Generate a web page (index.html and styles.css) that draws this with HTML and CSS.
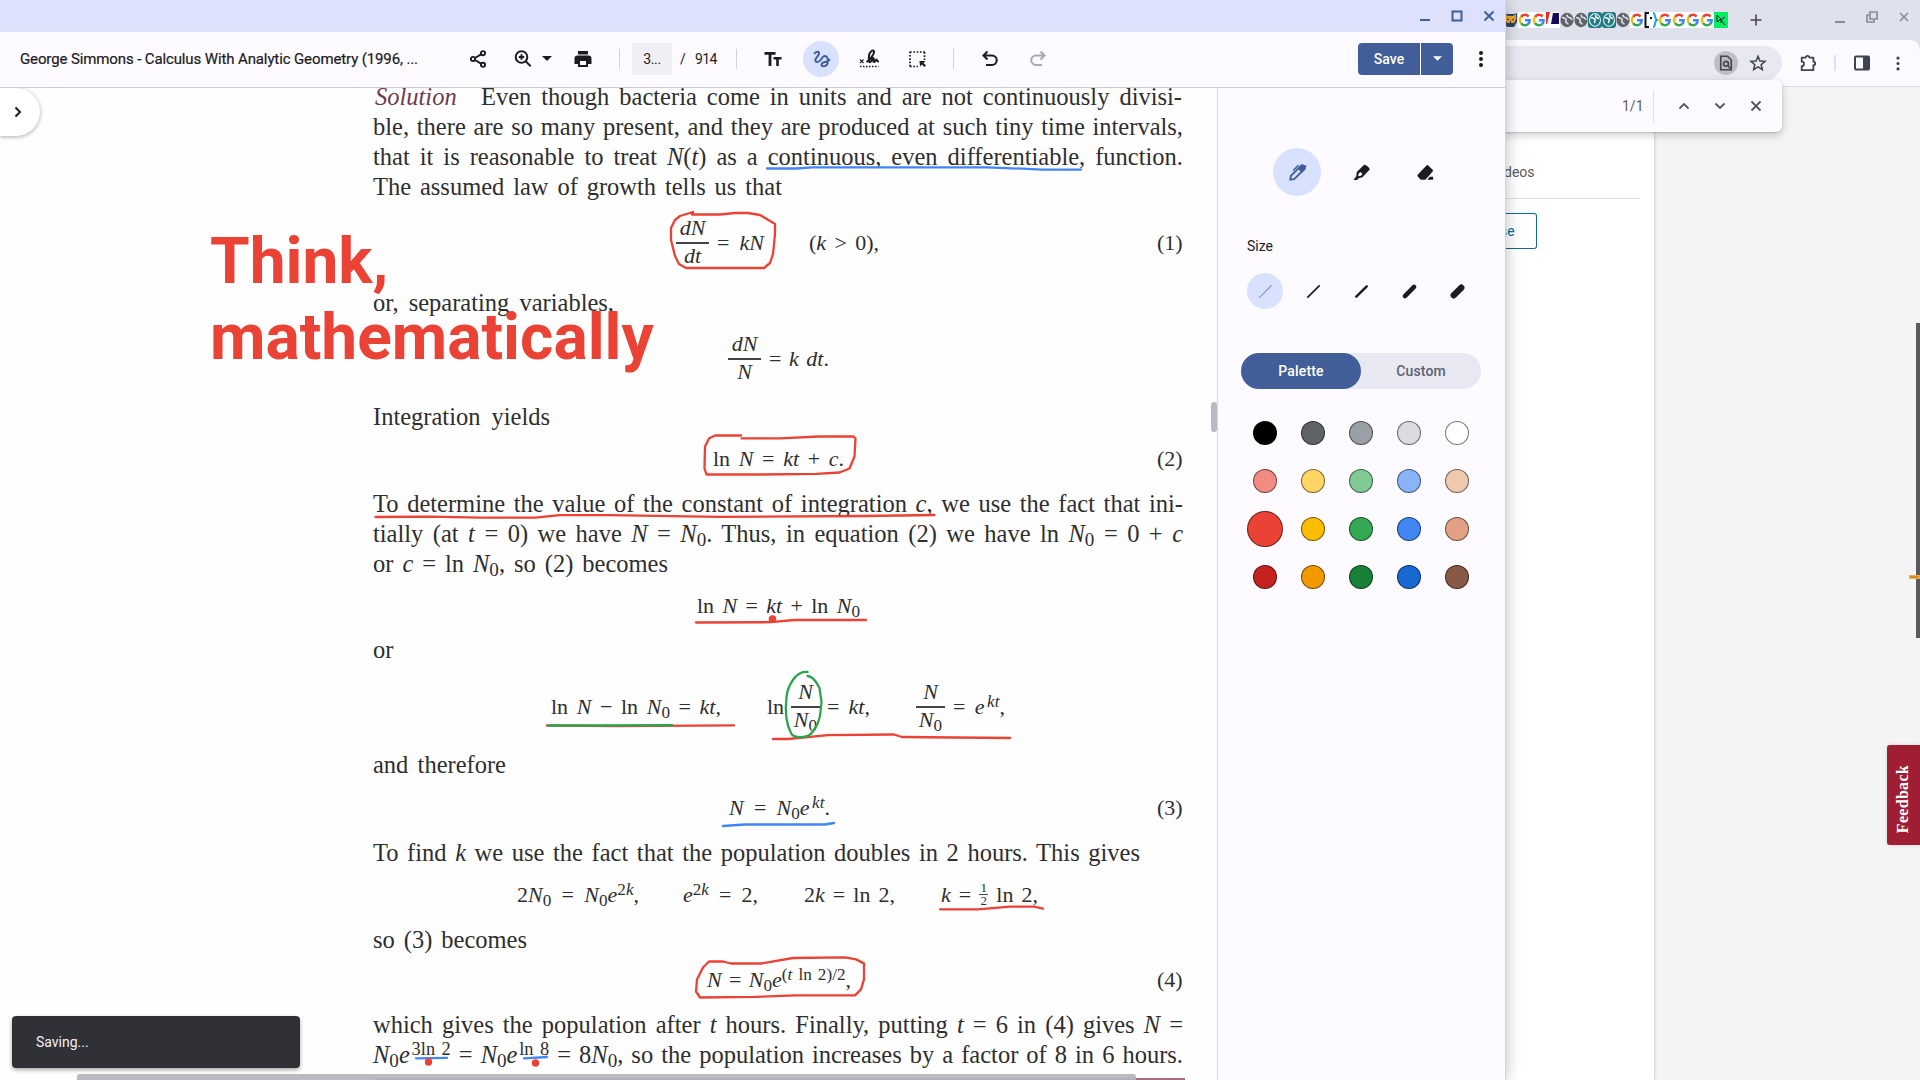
FILE: index.html
```html
<!DOCTYPE html>
<html lang="en">
<head>
<meta charset="utf-8">
<title>George Simmons - Calculus With Analytic Geometry</title>
<link rel="stylesheet" href="styles.css">
</head>
<body>
<svg class="defs" width="0" height="0">
  <symbol id="g" viewBox="0 0 14 16"><rect width="14" height="16" fill="#fff"/><g fill="none" stroke-width="2.6"><path d="M10.6 4.6A4.8 5 0 0 0 3 4.9" stroke="#ea4335"/><path d="M3 4.9a5 5.200 0 0 0 0 6.200" stroke="#fbbc05"/><path d="M3 11.100a4.800 5 0 0 0 7.300.7" stroke="#34a853"/><path d="M7 8.200h4.600c0 1.500-.5 2.700-1.300 3.600" stroke="#4285f4"/></g></symbol>
  <symbol id="globe" viewBox="0 0 14 16"><rect width="14" height="16" fill="#dfe1ed"/><ellipse cx="7" cy="8" rx="6.600" ry="7.200" fill="currentColor"/><path d="M2 5.500c2 0 3 .5 4 2s-1 2 0 3 2 0 2 2M7.500 2.500c-1 2 .5 3 2 3s1.500 2 3 2" fill="none" stroke="#dfe1ed" stroke-width="1.600"/></symbol>
  <symbol id="teal" viewBox="0 0 14 16"><rect width="14" height="16" rx="3" fill="#1f7a85"/><ellipse cx="7" cy="8" rx="5.500" ry="6.300" fill="none" stroke="#d5e8ea" stroke-width="1.200"/><path d="M3 6c2-1 3 .5 4 1.500s-1.500 2 0 3.500M8 3c-1 2 .5 3 3 3.500" fill="none" stroke="#fff" stroke-width="1.600"/></symbol>
</svg>

<div class="desktop">
  <section class="browser">
    <header class="tabstrip">
      <div class="favicons">
        <svg viewBox="0 0 14 16"><rect width="14" height="16" fill="#dfe1ed"/><path d="M0 1l3 1h7l3-1v9l-3 5H3L0 10z" fill="#2e4a6b"/><path d="M1 2l3 2h5l3-2v5l-2 4H3L1 7z" fill="#f5a623"/><path d="M3 7l2 1M10 7L8 8M4 12h5M6.500 9v2" stroke="#24344d"/></svg>
        <svg><use href="#g"/></svg><svg><use href="#g"/></svg>
        <svg viewBox="0 0 14 16"><rect width="14" height="16" fill="#fff"/><path d="M0 0h4L1 12H0z" fill="#ee2b1f"/><path d="M7 1h6v11H5z" fill="#160a5a"/></svg>
        <svg class="gray"><use href="#globe"/></svg><svg class="gray"><use href="#globe"/></svg>
        <svg><use href="#teal"/></svg><svg><use href="#teal"/></svg>
        <svg class="gray"><use href="#globe"/></svg><svg><use href="#g"/></svg>
        <svg viewBox="0 0 14 16"><rect width="14" height="16" fill="#fff"/><path d="M5 1H1.500v14H5" fill="none" stroke="#111" stroke-width="2"/><path d="M6 5h2v2H6z" fill="#111"/><path d="M9 1c3 0 1 6 4 7-3 1-1 7-4 7" fill="none" stroke="#19a7e8" stroke-width="2"/></svg>
        <svg><use href="#g"/></svg><svg><use href="#g"/></svg><svg><use href="#g"/></svg><svg><use href="#g"/></svg>
        <svg viewBox="0 0 14 16"><rect width="14" height="16" fill="#03ef62"/><path d="M3 3v7l4-3zM11 5L7 8l4 5M7 8v3" fill="none" stroke="#05192d"/></svg>
      </div>
      <svg class="plus" viewBox="0 0 12 12"><path d="M6 .5v11M.5 6h11" stroke="#45464f" stroke-width="1.600"/></svg>
      <svg class="wc wc-min" viewBox="0 0 12 12"><path d="M1 10h10" stroke="#8b8d98" stroke-width="2"/></svg>
      <svg class="wc wc-res" viewBox="0 0 12 12"><path d="M4 1h7v7H4zM3 4H1v7h7V9" fill="none" stroke="#8b8d98" stroke-width="1.700"/></svg>
      <svg class="wc wc-x" viewBox="0 0 12 12"><path d="M2 2l8 8M10 2l-8 8" stroke="#8b8d98" stroke-width="1.700"/></svg>
    </header>
    <div class="navbar">
      <div class="omnibox">
        <span class="findchip"><svg viewBox="0 0 24 24"><path d="M5 3h9l5 5v13H5z" fill="none" stroke="#45464f" stroke-width="2.200"/><circle cx="12" cy="13" r="3.200" fill="none" stroke="#45464f" stroke-width="2.200"/><path d="M14 15l4.500 5" stroke="#45464f" stroke-width="2.200"/></svg></span>
        <svg class="star" viewBox="0 0 24 24"><path d="M12 3l2.600 6.300 6.800.5-5.200 4.400 1.600 6.600-5.800-3.500-5.800 3.500 1.600-6.600-5.200-4.400 6.800-.5z" fill="none" stroke="#3f4350" stroke-width="2"/></svg>
      </div>
      <svg class="puzzle" viewBox="0 0 20 20"><path d="M3 4h4.500a2 2 0 0 1 4 0H16v4.500a2 2 0 0 1 0 4V18H3v-4.500a2.500 2.500 0 0 0 0-5z" fill="none" stroke="#3f4350" stroke-width="2" stroke-linejoin="round"/></svg>
      <i class="navsep"></i>
      <svg class="side" viewBox="0 0 16 16"><rect x="1" y="1.500" width="14" height="13" rx="1" fill="none" stroke="#3f4350" stroke-width="2"/><path d="M9 1h6v14H9z" fill="#3f4350"/></svg>
      <svg class="kebab" viewBox="0 0 4 16"><path d="M2 2.200v.01M2 8v.01M2 13.800v.01" stroke="#3f4350" stroke-width="3.400" stroke-linecap="round"/></svg>
    </div>
    <main class="webpage">
      <div class="sheet">
        <div class="webtab">deos</div>
        <div class="webbtn">se</div>
      </div>
    </main>
    <div class="findbar">
      <span>1/1</span><i></i>
      <svg viewBox="0 0 12 12"><path d="M1.500 8.500L6 4l4.500 4.500" /></svg>
      <svg viewBox="0 0 12 12"><path d="M1.500 3.500L6 8l4.500-4.500" /></svg>
      <svg viewBox="0 0 12 12"><path d="M1.500 1.500l9 9M10.500 1.500l-9 9" /></svg>
    </div>
    <i class="pagethumb"></i><i class="findmark"></i>
    <div class="feedback"><span>Feedback</span></div>
  </section>

  <section class="viewer">
    <header class="titlebar">
      <svg viewBox="0 0 12 12"><path d="M1 10h10"/></svg>
      <svg viewBox="0 0 12 12"><path d="M1.500 1.500h9v9h-9z"/></svg>
      <svg viewBox="0 0 12 12"><path d="M1.500 1.500l9 9M10.500 1.500l-9 9"/></svg>
    </header>
    <div class="toolbar">
      <h1>George Simmons - Calculus With Analytic Geometry (1996, ...</h1>
      <svg class="ic share" viewBox="0 0 20 20"><g fill="none" stroke="currentColor" stroke-width="1.900"><circle cx="15" cy="4.200" r="2.100"/><circle cx="5" cy="10" r="2.100"/><circle cx="15" cy="15.800" r="2.100"/><path d="M7 9l6-3.600M7 11l6 3.600"/></g></svg>
      <svg class="ic zoomin" viewBox="0 0 20 20"><g fill="none" stroke="currentColor" stroke-width="2"><circle cx="8.500" cy="8" r="5.800"/><path d="M12.700 12.300l5 5M8.500 5.300v5.400M5.800 8h5.400"/></g></svg>
      <svg class="ic caret" viewBox="0 0 10 5"><path d="M0 0h10L5 5z" fill="currentColor"/></svg>
      <svg class="ic printer" viewBox="0 0 20 20"><path d="M5 2h10v3.500H5zM4.500 6.500h11a3 3 0 0 1 3 3V15H15v3H5v-3H1.500V9.500a3 3 0 0 1 3-3zM7 12v4h6v-4z" fill="currentColor" fill-rule="evenodd"/></svg>
      <i class="sep s1"></i>
      <span class="pageno">3...</span><span class="slash">/</span><span class="total">914</span>
      <i class="sep s2"></i>
      <svg class="ic tt" viewBox="0 0 20 20"><path d="M1.500 3h11v2.700H8.400V17H5.600V5.700H1.500zM10.500 8h8v2.600h-2.700V17h-2.600v-6.400h-2.700z" fill="currentColor"/></svg>
      <span class="active"><svg viewBox="0 0 20 20"><path d="M2.700 4.500C4.500 2.300 7.800 2 7.300 5S3.200 9.500 3.500 12s3 2 4.700.5 2-3 3.600-4.300 4-.9 4.500 1.400.4 6.500-1.700 7.800-5 .7-4.600-1.100 2.500-2.500 4.600-2.800 2.800-1 3.800-2.100" fill="none" stroke="#415e98" stroke-width="2.100" stroke-linecap="round"/></svg></span>
      <svg class="ic sign" viewBox="0 0 20 20"><path d="M1 10.500l3.500 3.500M4.500 10.500L1 14" stroke="currentColor" stroke-width="1.100"/><path d="M7.500 13C11 11 15.500 5 15 2.500S10.500 2 10 7s0 7 1.500 6 1.500-4 2.800-4-.8 4 .7 4 1.500-2.500 2.500-2.500-.2 2.500 2.800 2" fill="none" stroke="currentColor" stroke-width="2"/><path d="M1 17.500h18.500" stroke="currentColor" stroke-width="1.500" stroke-dasharray="1.500 1.500"/></svg>
      <svg class="ic select" viewBox="0 0 20 20"><path d="M3 17.500V2.500M3 3h15M17.500 3v8M3 17.500h8" fill="none" stroke="currentColor" stroke-width="1.700" stroke-dasharray="1.700 1.600"/><path d="M12.500 12h6l-2 2 2.500 2.500-1.500 1.500-2.500-2.500-2 2z" fill="currentColor"/></svg>
      <i class="sep s3"></i>
      <svg class="ic undo" viewBox="0 0 20 20"><path d="M7.500 2.500L3.500 6.500l4 4M4 6.500h8a4.700 4.700 0 0 1 0 9.500H6" fill="none" stroke="currentColor" stroke-width="2.100"/></svg>
      <svg class="ic redo" viewBox="0 0 20 20"><path d="M12.500 2.500l4 4-4 4M16 6.500H8A4.700 4.700 0 0 0 8 16h6" fill="none" stroke="currentColor" stroke-width="2"/></svg>
      <div class="save"><span>Save</span><b><svg viewBox="0 0 10 5"><path d="M0 0h10L5 5z" fill="#fff"/></svg></b></div>
      <svg class="ic more" viewBox="0 0 4 16"><path d="M2 2v.01M2 8v.01M2 14v.01" stroke="currentColor" stroke-width="4" stroke-linecap="round"/></svg>
    </div>
    <div class="content">
      <article class="doc">
        <div class="ln l1"><em class="sol">Solution</em><span class="w l1b">Even though bacteria come in units and are not continuously divisi-</span></div>
        <div class="ln l2 w">ble, there are so many present, and they are produced at such tiny time intervals,</div>
        <div class="ln l3 w">that it is reasonable to treat <i>N</i>(<i>t</i>) as a continuous, even differentiable, function.</div>
        <div class="ln l4 w">The assumed law of growth tells us that</div>
        <div class="ln eq q1"><span class="frac"><i>dN</i><i>dt</i></span><span class="w q1a">= <i>kN</i></span><span class="w q1b">(<i>k</i> &gt; 0),</span><span class="no">(1)</span></div>
        <div class="ln l5 w">or, separating variables,</div>
        <div class="ln eq q2"><span class="frac"><i>dN</i><i>N</i></span><span class="w q2a">= <i>k dt</i>.</span></div>
        <div class="ln l6 w">Integration yields</div>
        <div class="ln eq q3"><span class="w">ln <i>N</i> = <i>kt</i> + <i>c</i>.</span><span class="no">(2)</span></div>
        <div class="ln l7 w">To determine the value of the constant of integration <i>c</i>, we use the fact that ini-</div>
        <div class="ln l8 w">tially (at <i>t</i> = 0) we have <i>N</i> = <i>N</i><sub>0</sub>. Thus, in equation (2) we have ln <i>N</i><sub>0</sub> = 0 + <i>c</i></div>
        <div class="ln l9 w">or <i>c</i> = ln <i>N</i><sub>0</sub>, so (2) becomes</div>
        <div class="ln eq q4"><span class="w">ln <i>N</i> = <i>kt</i> + ln <i>N</i><sub>0</sub></span></div>
        <div class="ln l10">or</div>
        <div class="ln eq q5"><span class="w q5a">ln <i>N</i> − ln <i>N</i><sub>0</sub> = <i>kt</i>,</span><span class="q5b">ln</span><span class="frac"><i>N</i><span><i>N</i><sub>0</sub></span></span><span class="w q5c">= <i>kt</i>,</span><span class="frac f3"><i>N</i><span><i>N</i><sub>0</sub></span></span><span class="w q5d">= <i>e</i><sup class="gap"><i>kt</i></sup>,</span></div>
        <div class="ln l11 w">and therefore</div>
        <div class="ln eq q6"><span class="w"><i>N</i> = <i>N</i><sub>0</sub><i>e</i><sup class="gap"><i>kt</i></sup>.</span><span class="no">(3)</span></div>
        <div class="ln l12 w">To find <i>k</i> we use the fact that the population doubles in 2 hours. This gives</div>
        <div class="ln eq q7"><span class="w q7a">2<i>N</i><sub>0</sub> = <i>N</i><sub>0</sub><i>e</i><sup>2<i>k</i></sup>,</span><span class="w q7b"><i>e</i><sup>2<i>k</i></sup> = 2,</span><span class="w q7c">2<i>k</i> = ln 2,</span><span class="w q7d"><i>k</i> = <span class="half"><span>1</span><span>2</span></span> ln 2,</span></div>
        <div class="ln l13 w">so (3) becomes</div>
        <div class="ln eq q8"><span class="w"><i>N</i> = <i>N</i><sub>0</sub><i>e</i><sup>(<i>t</i> ln 2)/2</sup>,</span><span class="no">(4)</span></div>
        <div class="ln l14 w">which gives the population after <i>t</i> hours. Finally, putting <i>t</i> = 6 in (4) gives <i>N</i> =</div>
        <div class="ln l15 w"><i>N</i><sub>0</sub><i>e</i><sup class="thin">3ln&nbsp;2</sup> = <i>N</i><sub>0</sub><i>e</i><sup class="thin">ln&nbsp;8</sup> = 8<i>N</i><sub>0</sub>, so the population increases by a factor of 8 in 6 hours.</div>
        <div class="note">Think,<br>mathematically</div>
        <svg class="ink" viewBox="0 88 1217 992" width="1217" height="992">
          <g fill="none" stroke-width="2.300" stroke-linejoin="round" stroke-linecap="round">
            <g stroke="#4285f4">
              <path d="M767 168.500h30l15-1.200h175l35 1.400 20 .9h39"/>
              <path d="M723 826l22-1.500h80l9-1.500"/>
              <path d="M416 1058.300l31-.5M524 1058.300l23-1.300"/>
            </g>
            <g stroke="#ea4335">
              <path d="M692 214.500h28l15-1.500h13l12 2 15 9v10l-2 20-3 9-6 5h-78l-7-4-4-8-4-16v-12l4-8 5-4 13-4z"/>
              <path d="M741 435.500h-26l-6 3-4 8-.5 22 2 6h55l55-.7 23-1.300 10-4 5-12 1-18-2-2h-35l-38 1.800h-39"/>
              <path d="M375.500 517l55-.3 50 1h55l24-2.500h50l110 1.600 145-.8 70-1"/>
              <path d="M696 622.500l75-.3 23-2.200h72"/>
              <path d="M547 725.500l70 .7 117-.8"/>
              <path d="M773 739h15l40-3.800 66-.7 8 2.500 108 1"/>
              <path d="M940 909.300h38l32-2.700h24l9 2"/>
              <path d="M723 961.500h-14l-6 6-6 12-1 12 4 6 55-.6 40-1.500h60l6-6 3-10v-16l-8-4-11-2-52 .6-32 5.500h-30z"/>
            </g>
            <g stroke="#2da44e">
              <path d="M549 725.500h45l78-.4"/>
              <path d="M807.500 672c-12-2-20 15-21 25-2 17 1 30 5 37 3 4 16 5 21-2 4-6 7-10 8-20l1-10-2-14c-4-8-8-12-12-12"/>
            </g>
          </g>
          <g fill="#ea4335"><circle cx="772.500" cy="619" r="3.800"/><circle cx="428.500" cy="1062" r="3.700"/><circle cx="535.500" cy="1063" r="3.700"/></g>
        </svg>
        <button class="drawer"><svg viewBox="0 0 8 12"><path d="M1.500 1.500L6 6l-4.500 4.500" fill="none" stroke="#1b1b21" stroke-width="2"/></svg></button>
        <i class="vthumb"></i><i class="rule"></i><i class="hthumb"></i>
        <div class="toast">Saving...</div>
      </article>
      <aside class="panel">
        <div class="tools">
          <span class="on"><svg viewBox="0 0 20 20"><path d="M2.500 17.500l.5-4L12.500 4 16 7.500 6.500 17z" fill="none" stroke="#415e98" stroke-width="2"/><path d="M11 5.500L14.500 2l4 1.500L18 6l-3.500 3.500zM5.500 8L11 2" fill="#415e98" stroke="#415e98" stroke-width="1.500"/></svg></span>
          <span><svg viewBox="0 0 20 20"><path d="M5 9.500L12.500 2c1-1 6.500 2.500 6 5L11 15l-4 1-1.500 2H1.500l3-4zM7 11l-.5 3 3-.5 1.500-2-2-2z" fill="#1b1b21" fill-rule="evenodd"/></svg></span>
          <span><svg viewBox="0 0 20 20"><path d="M2 12L11 2.500q1-1 2 0l4.500 4.500q1 1 0 2L10 17.500H5L2 14.500Q1 13 2 12zM14.500 14.500H18v3h-6z" fill="#1b1b21"/></svg></span>
        </div>
        <h2>Size</h2>
        <div class="sizes">
          <span class="on"><svg viewBox="0 0 20 20"><path d="M3.500 16.500l13-13" stroke="#8da2d6" stroke-width="1.400"/></svg></span>
          <span><svg viewBox="0 0 20 20"><path d="M3.500 16.500l13-13" stroke="#1b1b21" stroke-width="1.800"/></svg></span>
          <span><svg viewBox="0 0 20 20"><path d="M4.500 15.500l11-11" stroke="#1b1b21" stroke-width="2.600" stroke-linecap="round"/></svg></span>
          <span><svg viewBox="0 0 20 20"><path d="M5.200 14.800l9.600-9.600" stroke="#1b1b21" stroke-width="4.800" stroke-linecap="round"/></svg></span>
          <span><svg viewBox="0 0 20 20"><path d="M6 14l8-8" stroke="#1b1b21" stroke-width="6.600" stroke-linecap="round"/></svg></span>
        </div>
        <div class="toggle"><span class="sel">Palette</span><span>Custom</span></div>
        <div class="swatches">
          <i style="background:#000"></i><i style="background:#5f6368"></i><i style="background:#9aa0a6"></i><i style="background:#dadce0"></i><i style="background:#fff"></i>
          <i style="background:#f28b82"></i><i style="background:#fdd663"></i><i style="background:#81c995"></i><i style="background:#8ab4f8"></i><i style="background:#eec9ae"></i>
          <i class="big" style="background:#ea4335"></i><i style="background:#fbbc04"></i><i style="background:#34a853"></i><i style="background:#4285f4"></i><i style="background:#e2a185"></i>
          <i style="background:#c5221f"></i><i style="background:#f29900"></i><i style="background:#188038"></i><i style="background:#1967d2"></i><i style="background:#885945"></i>
        </div>
      </aside>
    </div>
  </section>
</div>
</body>
</html>
```
FILE: styles.css
```css
* { box-sizing: border-box; }
body { margin: 0; font-family: Roboto, "Open Sans", sans-serif; color: #1b1b21; overflow: hidden; }
.defs { position: absolute; }
svg { display: block; flex: none; }
.desktop { position: relative; width: 1920px; height: 1080px; overflow: hidden; background: #f4f4f4; }

/* Browser window behind */
.browser { height: 1080px; padding-left: 1505px; display: flex; flex-direction: column; background: #dfe1ed; }
.tabstrip { height: 40px; display: flex; align-items: flex-start; padding-top: 12px; }
.favicons { display: flex; width: 223px; margin-left: -1px; margin-right: 1px; }
.favicons svg { width: 14px; height: 16px; }
.gray { color: #5f6368; }
.plus { width: 12px; height: 12px; margin: 2px 0 0 22px; }
.wc { width: 12px; height: 12px; }
.wc-min { margin-left: 72px; }
.wc-res { margin: -1px 0 0 20px; }
.wc-x { margin: -1px 0 0 20px; }
.navbar { height: 47px; display: flex; align-items: center; background: #fbfaff; border-radius: 0 10px 0 0; border-bottom: 1px solid #dcdde6; }
.omnibox { width: 277px; height: 34px; border-radius: 0 17px 17px 0; background: #e7e8f1; display: flex; align-items: center; padding-left: 209px; }
.findchip { width: 24px; height: 24px; border-radius: 50%; background: #bdbdc6; display: flex; align-items: center; justify-content: center; }
.findchip svg { width: 18px; height: 18px; }
.star { width: 18px; height: 18px; margin-left: 11px; }
.puzzle { width: 18px; height: 18px; margin-left: 17px; }
.navsep { width: 2px; height: 16px; margin-left: 17px; background: #d8e2ff; }
.side { width: 16px; height: 16px; margin-left: 18px; }
.kebab { width: 4px; height: 15px; margin-left: 26px; }
.webpage { flex: 1; background: #f4f4f4; }
.sheet { width: 150px; height: 993px; background: #fff; border-right: 1px solid #dcdcdc; box-shadow: 1px 0 2px #0001; overflow: hidden; }
.webtab { height: 112px; width: 135px; padding-top: 76px; border-bottom: 1px solid #dedfe0; font-size: 14px; line-height: 18px; color: #5a5a5a; text-indent: -1px; }
.webbtn { width: 32px; height: 36px; margin-top: 14px; border: 1px solid #0f6c91; border-left: 0; border-radius: 0 3px 3px 0; font-size: 14px; line-height: 35px; color: #0f6c91; text-indent: -5px; }
.findbar { position: absolute; left: 1480px; top: 80px; width: 302px; height: 52px; padding-left: 142px; border-radius: 0 6px 6px 0; background: #fdfbff; box-shadow: 0 3px 10px #0003, 0 1px 2px #0002; display: flex; align-items: center; font-size: 14px; color: #5a5b62; }
.findbar span { width: 35px; }
.findbar i { width: 1px; height: 32px; background: #d8e2ff; margin-right: 20px; }
.findbar svg { width: 12px; height: 12px; margin-right: 24px; fill: none; stroke: #55565d; stroke-width: 1.8; position: static; transform: translateX(4px); }
.pagethumb { position: absolute; left: 1916px; top: 323px; width: 4px; height: 315px; background: #5b5b5f; }
.findmark { position: absolute; left: 1909px; top: 575px; width: 11px; height: 4px; background: #d98a1e; border: 1px solid #f0b050; }
.feedback { position: absolute; left: 1887px; top: 745px; width: 33px; height: 100px; border-radius: 3px 0 0 3px; background: #a01e33; color: #fff; box-shadow: 0 0 4px #0002; display: flex; align-items: center; justify-content: center; padding: 8px 1px 0 0; }
.feedback span { writing-mode: vertical-rl; transform: rotate(180deg); font: bold 16px "Liberation Serif", serif; letter-spacing: .3px; }

/* PDF viewer window */
.viewer { position: absolute; left: 0; top: 0; width: 1506px; height: 1080px; display: flex; flex-direction: column; background: #fdfbff; border-right: 1px solid #d4d4da; box-shadow: 0 0 14px #0004; }
.titlebar { height: 32px; background: #dde1fb; display: flex; justify-content: flex-end; align-items: center; gap: 20px; padding-right: 10px; }
.titlebar svg { width: 12px; height: 12px; fill: none; stroke: #415e98; stroke-width: 2; }
.toolbar { height: 56px; display: flex; align-items: center; padding: 0 0 2px 20px; border-bottom: 1px solid #cbcad2; }
.toolbar h1 { margin: 0; width: 448px; font-size: 15px; font-weight: 400; letter-spacing: -.12px; white-space: nowrap; line-height: 20px; -webkit-text-stroke: .2px; }
.ic { width: 20px; height: 20px; }
.zoomin { margin-left: 25px; }
.caret { width: 10px; height: 5px; margin-left: 9px; }
.printer { margin-left: 21px; }
.sep { width: 1px; height: 20px; background: #d3d2da; }
.s1 { margin-left: 26px; }
.pageno { width: 40px; height: 32px; margin-left: 12px; border-radius: 3px; background: #f0eff6; font-size: 14px; line-height: 33px; text-align: center; letter-spacing: -.4px; }
.slash { margin-left: 8px; width: 15px; font-size: 14px; }
.total { width: 41px; font-size: 14px; letter-spacing: -.6px; }
.tt { margin-left: 26px; }
.active { width: 36px; height: 36px; margin-left: 20px; border-radius: 50%; background: #d8e2ff; display: flex; align-items: center; justify-content: center; }
.active svg { width: 19px; height: 19px; }
.sign { margin-left: 20px; }
.select { margin-left: 28px; }
.s3 { margin-left: 26px; }
.undo { margin-left: 26px; }
.redo { margin-left: 28px; color: #a9a8b0; }
.save { width: 95px; height: 32px; margin-left: 310px; border-radius: 4px; overflow: hidden; background: #415e98; color: #fff; display: flex; font-size: 14px; font-weight: 500; }
.save span { width: 62px; line-height: 32px; text-align: center; }
.save b { flex: 1; border-left: 1px solid #fff; display: flex; align-items: center; justify-content: center; }
.save b svg { width: 9px; height: 5px; }
.more { width: 4px; height: 16px; margin-left: 26px; }
.content { flex: 1; display: flex; }

/* Document page */
.doc { position: relative; width: 1217px; height: 992px; padding: 0 0 0 373px; background: #fefefe; overflow: hidden; font-family: "Liberation Serif", serif; font-size: 24.500px; color: #2e2e2e; }
.ln { height: 30px; line-height: 30px; white-space: nowrap; display: block; }
.w { text-align: justify; text-align-last: justify; display: block; flex: none; }
sub, sup { font-size: .78em; line-height: 0; }
sub { vertical-align: -.22em; }
sup { vertical-align: .42em; }
.gap { margin-left: .15em; }
.thin { font-size: .75em; margin-left: .1em; }
.eq, .l1 { display: flex; }
.eq { font-size: 22px; position: relative; }
.no { position: absolute; left: 784px; width: 26px; }
.sol { color: #70394f; width: 108px; padding-left: 2px; }
.l1 { margin-top: -6px; } .l1b { width: 701px; }
.l2, .l3, .l7, .l8, .l14, .l15 { width: 810px; }
.l4 { width: 409px; }
.l5 { width: 241px; margin-top: 30px; }
.l6 { width: 177px; margin-top: 28px; }
.l7 { margin-top: 15px; }
.l9 { width: 295px; }
.l10 { margin-top: 14px; }
.l11 { width: 133px; margin-top: 28px; }
.l12 { width: 767px; margin-top: 15px; }
.l13 { width: 154px; margin-top: 15px; }
.l14 { margin-top: 15px; }
.frac { display: grid; grid-template-rows: 28px 28px; height: 56px; margin-top: -14px; text-align: center; flex: none; width: 33px; position: relative; line-height: 28px; }
.frac::after { content: ""; position: absolute; left: 0; right: 0; top: 28px; height: 1.500px; background: #444; }
.q1 { margin-top: 26px; padding-left: 303px; } .q1a { width: 47px; margin-left: 8px; } .q1b { width: 70px; margin-left: 45px; }
.q2 { margin-top: 26px; padding-left: 355px; } .q2a { width: 60px; margin-left: 8px; }
.q3 { margin-top: 12px; padding-left: 340px; } .q3 .w { width: 131px; }
.q4 { margin-top: 12px; padding-left: 324px; } .q4 .w { width: 163px; }
.q5 { margin-top: 27px; padding-left: 178px; } .q5a { width: 170px; } .q5b { width: 24px; margin-left: 46px; } .q5 .frac { width: 29px; } .q5c { width: 43px; margin-left: 7px; } .q5 .f3 { margin-left: 46px; } .q5d { width: 52px; margin-left: 8px; }
.q6 { margin-top: 13px; padding-left: 356px; } .q6 .w { width: 101px; }
.q7 { margin-top: 12px; padding-left: 144px; } .q7a { width: 122px; } .q7b { width: 75px; margin-left: 44px; } .q7c { width: 91px; margin-left: 46px; } .q7d { width: 97px; margin-left: 46px; }
.q8 { margin-top: 10px; padding-left: 334px; } .q8 .w { width: 144px; }
.half { display: inline-grid; width: 9px; font-size: 13px; line-height: 12px; text-align-last: center; height: 25px; vertical-align: 10px; margin: -3px 0; }
.half span:first-child { border-bottom: 1px solid #444; }
.note { position: absolute; left: 210px; top: 136px; font: bold 64px/76px Roboto, sans-serif; color: #ea4335; white-space: nowrap; }
.ink { position: absolute; left: 0; top: 0; }
.drawer { position: absolute; left: 0; top: 0; width: 40px; height: 48px; padding: 0 0 0 14px; border: 0; border-radius: 0 24px 24px 0; background: #fff; box-shadow: 0 1px 4px #0005; }
.drawer svg { width: 8px; height: 12px; }
.vthumb { position: absolute; left: 1211px; top: 314px; width: 6px; height: 30px; border-radius: 3px; background: #bbbac4; }
.rule { position: absolute; left: 375px; top: 990px; width: 810px; height: 2px; background: #a56c80; }
.hthumb { position: absolute; left: 77px; top: 986px; width: 1059px; height: 6px; border-radius: 3px 3px 0 0; background: #b6b4beee; }
.toast { position: absolute; left: 12px; top: 928px; width: 288px; height: 52px; padding-left: 24px; border-radius: 4px; background: #303136; color: #f1f0f7; font: 14px/52px Roboto, sans-serif; box-shadow: 0 2px 4px #0005; }

/* Annotation panel */
.panel { flex: 1; border-left: 1px solid #d8d7de; padding: 60px 0 0 24px; }
.panel h2 { margin: 40px 0 0 5px; font-size: 14px; line-height: 20px; font-weight: 400; }
.tools { display: flex; gap: 16px; padding-left: 31px; }
.tools span { width: 48px; height: 48px; border-radius: 50%; display: flex; align-items: center; justify-content: center; }
.tools svg { width: 19px; height: 19px; }
.sizes { display: flex; gap: 12px; margin: 17px 0 0 5px; }
.sizes span { width: 36px; height: 36px; border-radius: 50%; display: flex; align-items: center; justify-content: center; }
.sizes svg { width: 19px; height: 19px; }
.on { background: #d8e2ff; }
.toggle { width: 240px; height: 36px; margin: 44px 0 0 -1px; border-radius: 18px; background: #e7e8f1; display: flex; font-size: 14px; line-height: 36px; font-weight: 500; color: #5f6274; text-align: center; letter-spacing: .15px; }
.toggle span { width: 120px; border-radius: 18px; }
.toggle .sel { background: #415e98; color: #fff; }
.swatches { display: grid; grid-template-columns: repeat(5, 48px); grid-auto-rows: 48px; place-items: center; margin: 20px 0 0 -1px; }
.swatches i { width: 24px; height: 24px; border-radius: 50%; border: 1px solid #0008; }
.swatches .big { width: 36px; height: 36px; }
```
